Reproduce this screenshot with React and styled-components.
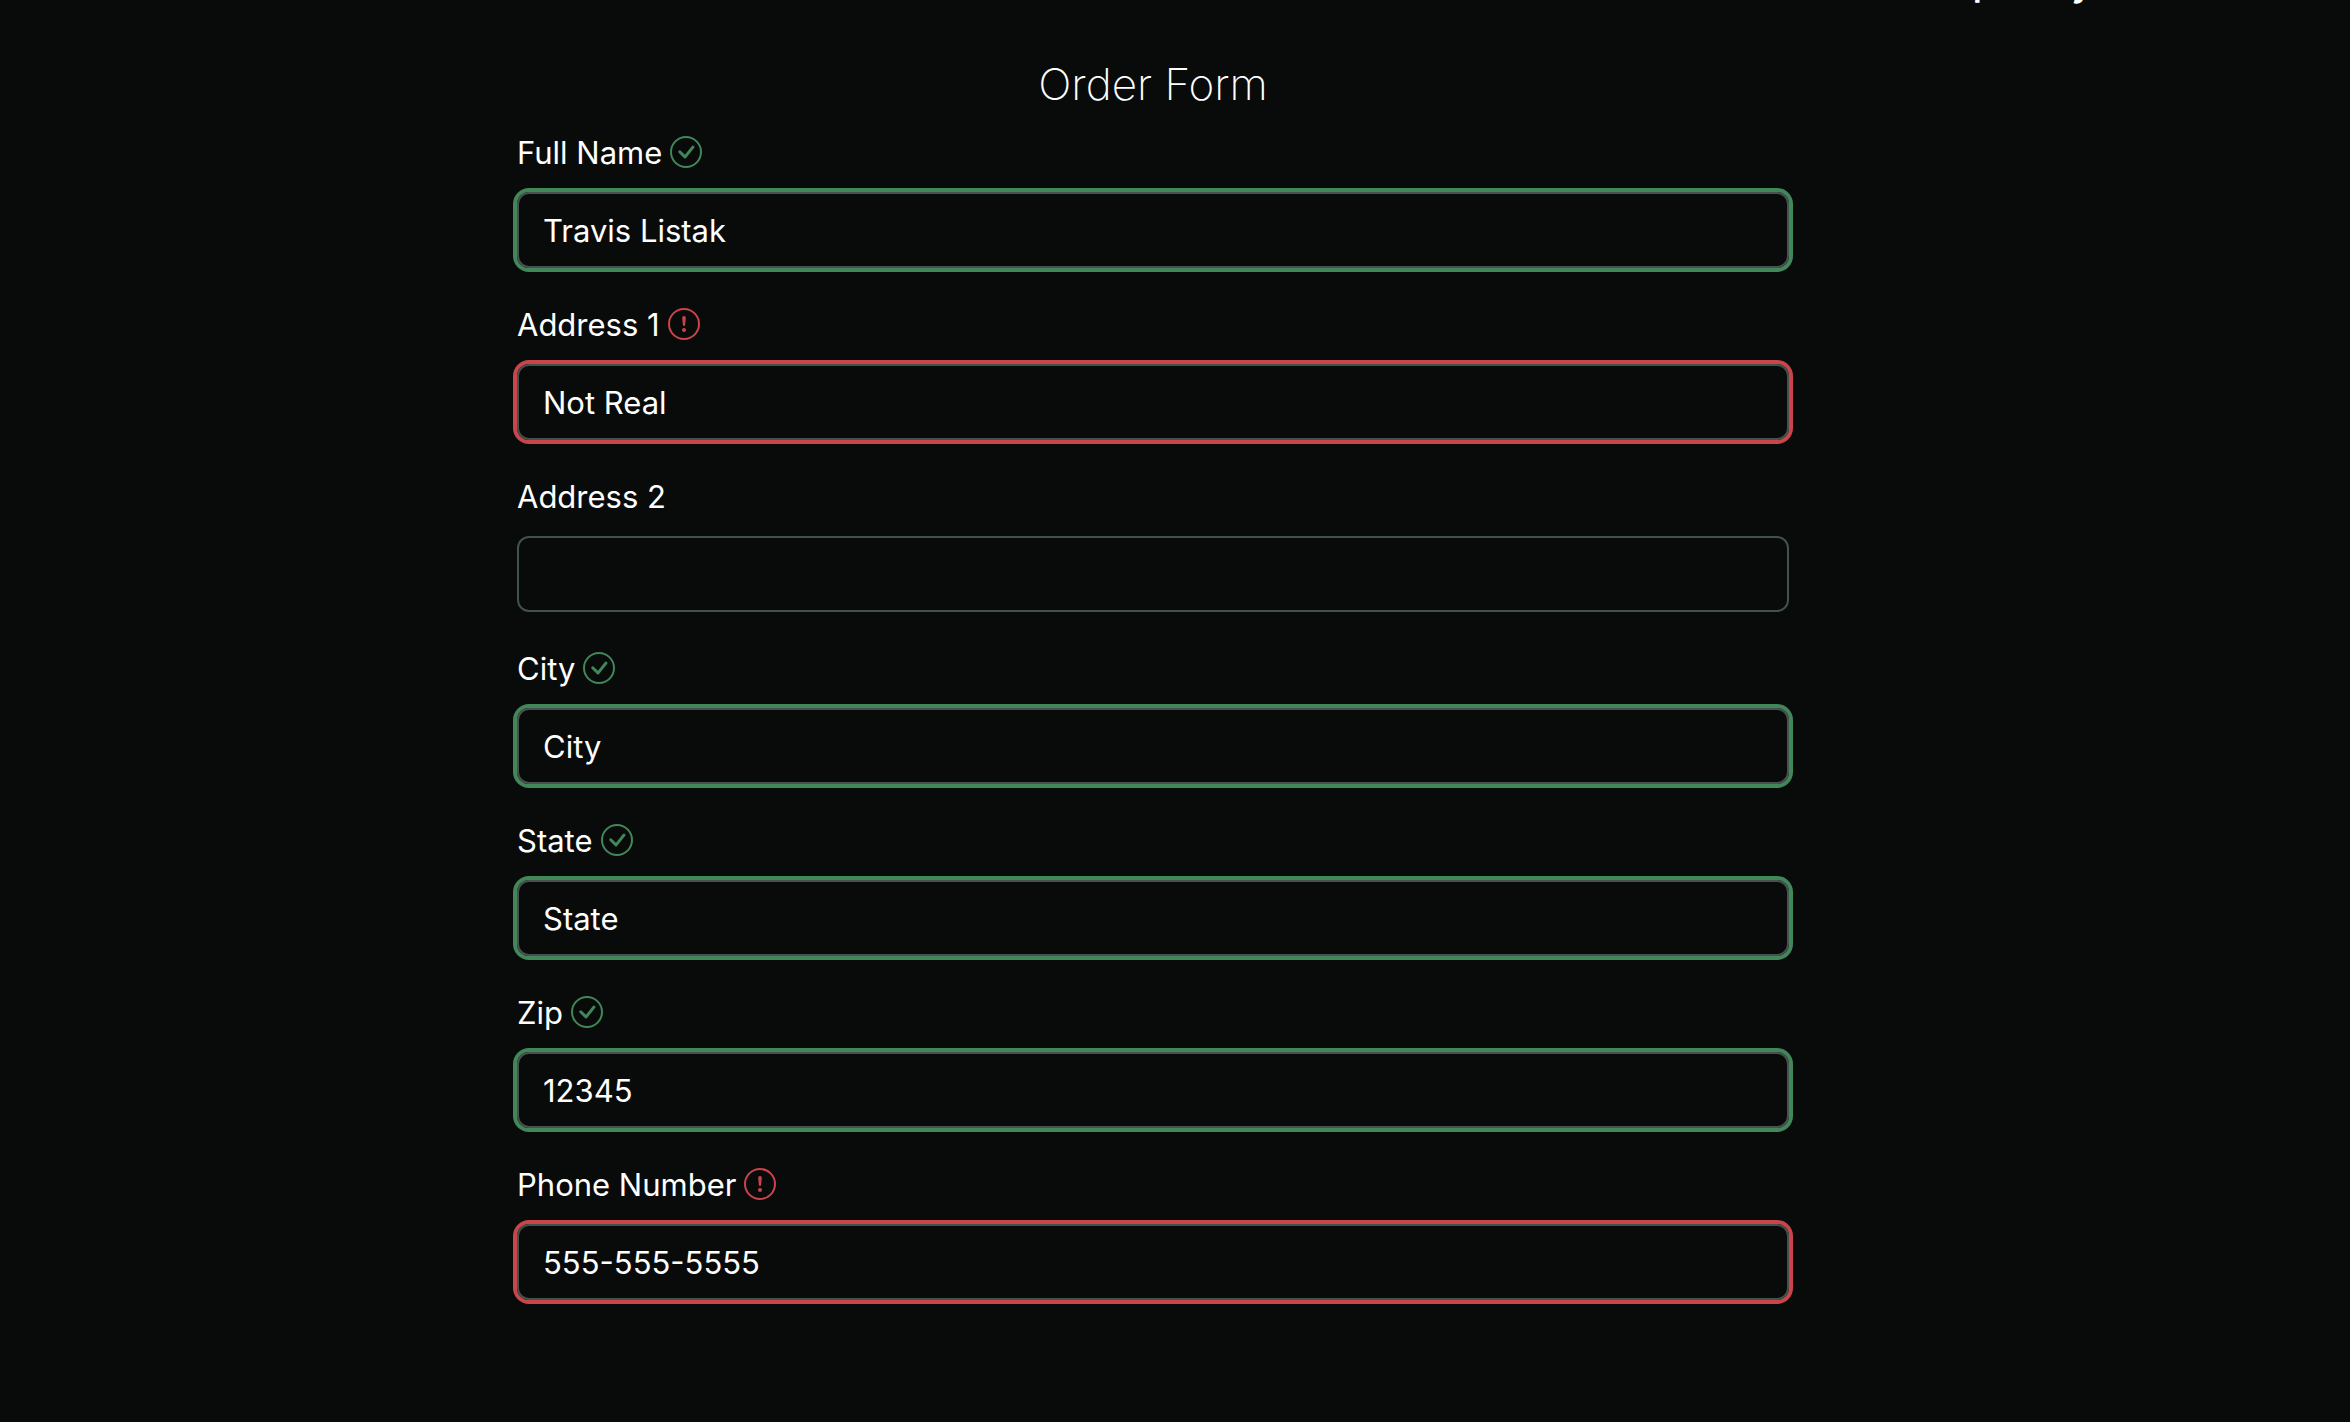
import React from "react";
import styled, { createGlobalStyle } from "styled-components";
import { BsCheckCircle, BsExclamationCircle } from "react-icons/bs";

const GlobalStyle = createGlobalStyle`
  *, *::before, *::after { box-sizing: border-box; }
  body {
    margin: 0;
    min-height: 100vh;
    background: #080b0a;
    color: #fff;
    font-family: Inter, "Liberation Sans", sans-serif;
    font-size: 31px;
    font-weight: 400;
    line-height: 48px;
  }
`;

const status = { valid: "#41875a", invalid: "#ca444b" };

const TopStrip = styled.header`
  display: flex;
  justify-content: flex-end;
  align-items: flex-end;
  gap: 74px;
  height: 12px;
  padding: 0 256px 7px 0;
  overflow: hidden;
  font-size: 40px;
  font-weight: 500;
`;

const Form = styled.form`
  width: 100%;
  max-width: 1272px;
  margin-left: 22%;
  padding-top: 40px;
`;

const Title = styled.h1`
  margin: 0 0 12px;
  font-size: 44px;
  font-weight: 200;
  line-height: 64px;
  text-align: center;
`;

const Field = styled.div`
  margin-bottom: 32px;
`;

const LabelRow = styled.div`
  display: flex;
  align-items: center;
  gap: 8px;
  height: 48px;
  margin-bottom: 16px;
  color: ${(p) => status[p.$state] || "#fff"};
`;

const Label = styled.label`
  padding-top: 2px;
  color: #fff;
`;

const Input = styled.input`
  display: block;
  width: 100%;
  height: 76px;
  padding: 12px 24px;
  border: 2px solid ${(p) => (p.$state === "valid" ? "#495050" : "#41514c")};
  border-radius: 12px;
  outline: none;
  background: transparent;
  box-shadow: ${(p) => (p.$state ? `0 0 0 4px ${status[p.$state]}` : "none")};
  color: #fff;
  font: inherit;
`;

const icons = { valid: BsCheckCircle, invalid: BsExclamationCircle };

const fields = [
  { id: "name", label: "Full Name", value: "Travis Listak", state: "valid" },
  { id: "address1", label: "Address 1", value: "Not Real", state: "invalid" },
  { id: "address2", label: "Address 2", value: "" },
  { id: "city", label: "City", value: "City", state: "valid" },
  { id: "state", label: "State", value: "State", state: "valid" },
  { id: "zip", label: "Zip", value: "12345", state: "valid" },
  { id: "phone", label: "Phone Number", value: "555-555-5555", state: "invalid" },
];

function FormField({ id, label, value, state }) {
  const Icon = icons[state];
  return (
    <Field>
      <LabelRow $state={state}>
        <Label htmlFor={id}>{label}</Label>
        {Icon && <Icon size={32} aria-hidden="true" />}
      </LabelRow>
      <Input id={id} defaultValue={value} $state={state} aria-invalid={state === "invalid"} />
    </Field>
  );
}

export default function App() {
  return (
    <>
      <GlobalStyle />
      <TopStrip>
        <span>p</span>
        <span>y</span>
      </TopStrip>
      <Form>
        <Title>Order Form</Title>
        {fields.map((f) => (
          <FormField key={f.id} {...f} />
        ))}
      </Form>
    </>
  );
}
